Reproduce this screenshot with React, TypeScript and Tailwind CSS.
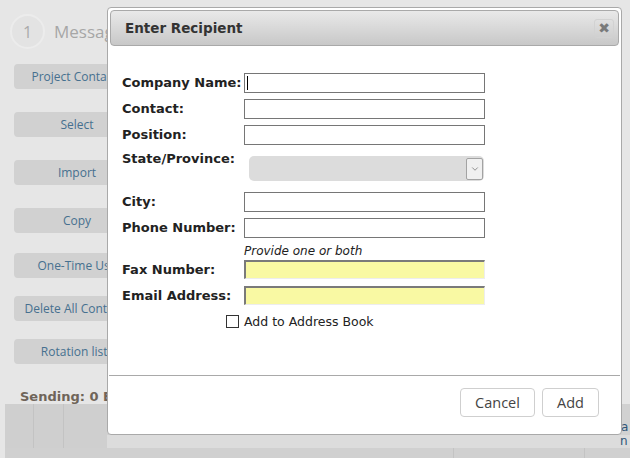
import { ChevronDown } from "lucide-react";

const sideButtons = [
  { label: "Project Contacts", mt: "mt-[15px]" },
  { label: "Select", mt: "mt-[23px]" },
  { label: "Import", mt: "mt-[23px]" },
  { label: "Copy", mt: "mt-[23px]" },
  { label: "One-Time Use", mt: "mt-[20px]" },
  { label: "Delete All Contacts", mt: "mt-[18px]" },
  { label: "Rotation lists", mt: "mt-[18px]" },
];

function TextField({ yellow, caret }: { yellow?: boolean; caret?: boolean }) {
  if (yellow) {
    return (
      <input
        type="text"
        className="block h-[19px] w-[241px] border-2 border-b border-r border-t-[#7a7a7a] border-l-[#7a7a7a] border-b-[#ededed] border-r-[#ededed] bg-[#f9f9a3] outline-none"
      />
    );
  }
  return (
    <div className="relative">
      <input
        type="text"
        className="block h-[20px] w-[241px] border border-[#767676] bg-white outline-none"
      />
      {caret && (
        <span className="absolute left-[3px] top-[3px] h-[14px] w-px bg-black" />
      )}
    </div>
  );
}

function Row({
  label,
  className,
  children,
}: {
  label: string;
  className?: string;
  children: React.ReactNode;
}) {
  return (
    <div className={`flex items-center ${className ?? ""}`}>
      <span className="w-[122px] shrink-0 whitespace-nowrap text-[13px] font-bold leading-[16px] text-[#222]">
        {label}
      </span>
      {children}
    </div>
  );
}

function RecipientDialog() {
  return (
    <div className="absolute left-[107px] top-[7px] flex h-[428px] w-[515px] flex-col rounded-[4px] border border-[#a9a9a9] bg-white font-['DejaVu_Sans',sans-serif]">
      <div className="mx-[2px] mt-[2px] flex h-[36px] items-center justify-between rounded-[4px] border border-[#a9a9a9] bg-gradient-to-b from-[#e9e9e9] to-[#c8c8c8] pl-[14px] pr-[4px]">
        <span className="text-[13.5px] font-bold text-[#333]">Enter Recipient</span>
        <button
          type="button"
          className="flex h-[19px] w-[20px] items-center justify-center rounded-[3px] border border-[#d2d2d2] text-[14px] leading-none text-[#7a7a7a]"
          aria-label="Close"
        >
          ✖
        </button>
      </div>

      <div className="flex flex-col pl-[14px]">
        <Row label="Company Name:" className="mt-[27px]">
          <TextField caret />
        </Row>
        <Row label="Contact:" className="mt-[6px]">
          <TextField />
        </Row>
        <Row label="Position:" className="mt-[6px]">
          <TextField />
        </Row>
        <div className="mt-[6px] flex items-start">
          <span className="w-[122px] shrink-0 text-[13px] font-bold leading-[16px] text-[#222]">
            State/Province:
          </span>
          <div className="ml-[5px] mt-[5px] flex h-[25px] w-[235px] items-center justify-end rounded-[5px] bg-[#dcdcdc] pr-px">
            <span className="flex h-[22px] w-[17px] items-center justify-center rounded-[2px] border border-[#a3a3a3] bg-[#f0f0f0]">
              <ChevronDown className="h-[10px] w-[10px] text-[#555]" strokeWidth={1.5} />
            </span>
          </div>
        </div>
        <Row label="City:" className="mt-[11px]">
          <TextField />
        </Row>
        <Row label="Phone Number:" className="mt-[6px]">
          <TextField />
        </Row>
        <p className="ml-[122px] mt-[5px] h-[16px] text-[12px] italic leading-[16px] text-[#222]">
          Provide one or both
        </p>
        <Row label="Fax Number:" className="mt-px">
          <TextField yellow />
        </Row>
        <Row label="Email Address:" className="mt-[7px]">
          <TextField yellow />
        </Row>
        <label className="ml-[104px] mt-[10px] flex h-[13px] items-center gap-[5px]">
          <span className="h-[13px] w-[13px] border border-[#333] bg-white" />
          <span className="text-[12.5px] leading-[13px] text-[#222]">Add to Address Book</span>
        </label>
      </div>

      <div className="mx-px mt-[47px] h-px bg-[#a9a9a9]" />

      <div className="mt-[12px] flex justify-end gap-[7px] pr-[22px] font-['Open_Sans',sans-serif]">
        <button
          type="button"
          className="h-[29px] w-[75px] rounded-[4px] border border-[#cfcfcf] bg-white text-[14.5px] text-[#444]"
        >
          Cancel
        </button>
        <button
          type="button"
          className="h-[29px] w-[57px] rounded-[4px] border border-[#cfcfcf] bg-white text-[14.5px] text-[#444]"
        >
          Add
        </button>
      </div>
    </div>
  );
}

export default function App() {
  return (
    <div className="relative h-[458px] w-[630px] overflow-hidden bg-[#e6e6e6]">
      <div className="flex h-[49px] items-end pl-[10px]">
        <div className="flex items-center">
          <span className="flex h-[35px] w-[35px] items-center justify-center rounded-full border-2 border-[#ececec] bg-[#e3e3e3] font-['Open_Sans',sans-serif] text-[16px] text-[#aaa]">
            1
          </span>
          <span className="ml-[9px] font-['Open_Sans',sans-serif] text-[17px] text-[#a6a6a6]">
            Message Content
          </span>
        </div>
      </div>

      <div className="flex flex-col pl-[14px] font-['Open_Sans',sans-serif]">
        {sideButtons.map((b) => (
          <div
            key={b.label}
            className={`${b.mt} flex h-[25px] w-[126px] items-center justify-center whitespace-nowrap rounded-[4px] bg-[#d1d1d1] text-[12px] text-[#46708f]`}
          >
            {b.label}
          </div>
        ))}
      </div>

      <p className="ml-[20px] mt-[25px] h-[15px] font-['DejaVu_Sans',sans-serif] text-[13px] font-bold leading-[15px] text-[#6f6459]">
        Sending: 0 Entries
      </p>

      <div className="ml-[5px] flex h-[44px]">
        <div className="w-[29px] border-r border-[#c3c3c3] bg-[#cfcfcf]" />
        <div className="w-[30px] border-r border-[#c3c3c3] bg-[#cfcfcf]" />
        <div className="w-[43px] bg-[#cfcfcf]" />
        <div className="flex flex-1 flex-col font-['DejaVu_Sans',sans-serif] text-[12px] leading-[13px] text-[#2f5577]">
          <div className="flex h-[31px] items-end bg-[#d1d1d1] pb-[1px] pl-[514px]">a</div>
          <div className="h-[13px] bg-[#dcdcdc] pl-[513px]">n</div>
        </div>
      </div>
      <div className="ml-[5px] flex h-[10px] bg-[#d0d0d0]">
        <div className="w-[449px] border-r border-[#c3c3c3]" />
        <div className="w-[131px] border-r border-[#c3c3c3]" />
      </div>

      <RecipientDialog />
    </div>
  );
}
